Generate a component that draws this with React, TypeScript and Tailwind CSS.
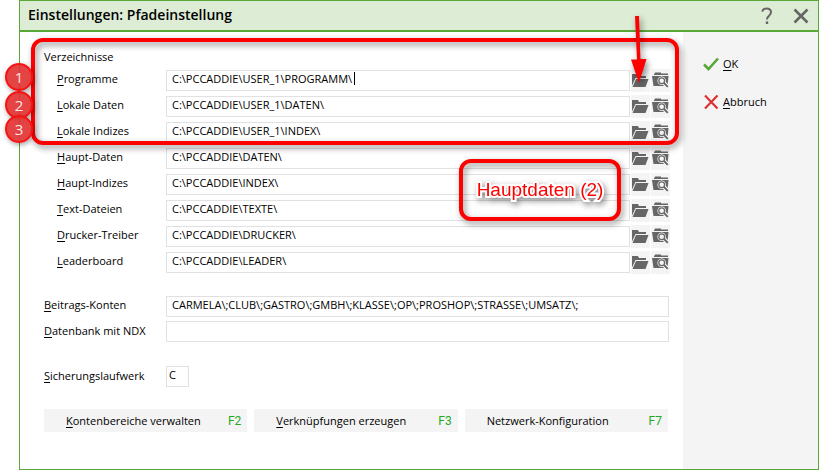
import { useId, type ReactNode } from "react";
import clsx from "clsx";

const directories = [
  { label: "Programme", value: "C:\\PCCADDIE\\USER_1\\PROGRAMM\\", active: true },
  { label: "Lokale Daten", value: "C:\\PCCADDIE\\USER_1\\DATEN\\" },
  { label: "Lokale Indizes", value: "C:\\PCCADDIE\\USER_1\\INDEX\\" },
  { label: "Haupt-Daten", value: "C:\\PCCADDIE\\DATEN\\" },
  { label: "Haupt-Indizes", value: "C:\\PCCADDIE\\INDEX\\" },
  { label: "Text-Dateien", value: "C:\\PCCADDIE\\TEXTE\\" },
  { label: "Drucker-Treiber", value: "C:\\PCCADDIE\\DRUCKER\\" },
  { label: "Leaderboard", value: "C:\\PCCADDIE\\LEADER\\" },
];

export default function App() {
  return (
    <div className="min-h-screen flex pl-[19px] bg-white font-['Open_Sans',sans-serif] text-[11px] leading-4 text-black">
      <div className="flex-1 min-w-0 flex flex-col border border-[#5aa637] bg-white">
        <TitleBar />
        <div className="flex-1 flex">
          <main className="flex-1 min-w-0 pl-6 pr-[13px] pt-[17px] pb-9">
            <DirectorySection />
            <AccountSection />
            <FunctionKeys />
          </main>
          <SideBar />
        </div>
      </div>
    </div>
  );
}

const TitleBar = () => {
  return (
    <header className="h-[31px] flex items-center justify-between pl-2 pr-[9px] border-b-2 border-[#5aa637] bg-[#ddecd5]">
      <h1 className="pb-[2px] text-[14px] leading-5 font-semibold">Einstellungen: Pfadeinstellung</h1>
      <div className="flex items-center gap-[19px]">
        <button aria-label="Hilfe">
          <svg width="14" height="18" viewBox="0 0 14 18" fill="none" stroke="#666" strokeWidth="2">
            <path d="M2.2 4.6C2.6 2.6 4.3 1.5 6.4 1.5C9 1.5 11 2.9 11 5.3C11 7.2 9.8 8.1 8.6 9.2C7.4 10.2 7 10.8 7 12.6" />
            <path d="M7 14.4V17" strokeWidth="2.4" />
          </svg>
        </button>
        <button aria-label="Schließen">
          <svg width="16" height="16" viewBox="0 0 16 16" fill="none" stroke="#666" strokeWidth="2.6">
            <path d="M1.5 1.5L14.5 14.5M14.5 1.5L1.5 14.5" />
          </svg>
        </button>
      </div>
    </header>
  );
};

const DirectorySection = () => {
  return (
    <section className="relative">
      <h2>Verzeichnisse</h2>
      <div className="mt-1 flex flex-col gap-[3px]">
        {directories.map((item) => (
          <DirectoryRow key={item.label} {...item} />
        ))}
      </div>
      <RedFrame className="-top-[11px] -left-[13px] -right-[9px] h-[107px]" />
      <Badge className="top-[14px]">1</Badge>
      <Badge className="top-[42px]">2</Badge>
      <Badge className="top-[66px]">3</Badge>
      <RedFrame className="right-[49px] top-[110px] w-[162px] h-[62px] flex items-center justify-center">
        <Caption />
      </RedFrame>
      <Arrow />
    </section>
  );
};

type RowProps = { label: string; value: string; active?: boolean };

const DirectoryRow = ({ label, value, active }: RowProps) => {
  const id = useId();

  return (
    <div className="h-[23px] flex items-center">
      <label htmlFor={id} className="w-[122px] pl-[13px] pb-1">
        <Accel text={label} />
      </label>
      <div className="relative flex-1 flex">
        <TextBox id={id} value={value} className="w-full pl-[5px]" />
        {active && <span className="absolute left-[188px] top-[2px] w-px h-[13px] bg-black" />}
      </div>
      <button aria-label={label + " öffnen"} className="ml-px w-[19px] h-[23px] flex items-center justify-center bg-[#f4f4f4]">
        <FolderIcon />
      </button>
      <button aria-label={label + " suchen"} className="ml-px w-[19px] h-[23px] flex items-center justify-center bg-[#f4f4f4]">
        <FolderSearchIcon />
      </button>
    </div>
  );
};

const AccountSection = () => {
  const id = useId();

  return (
    <section className="mt-[22px] pr-px flex flex-col gap-1">
      <div className="flex items-center">
        <label htmlFor={id + "k"} className="w-[122px] pb-1"><Accel text="Beitrags-Konten" /></label>
        <TextBox
          id={id + "k"}
          value={"CARMELA\\;CLUB\\;GASTRO\\;GMBH\\;KLASSE\\;OP\\;PROSHOP\\;STRASSE\\;UMSATZ\\;"}
          className="flex-1 pl-[5px]"
        />
      </div>
      <div className="flex items-center">
        <label htmlFor={id + "n"} className="w-[122px] pb-[2px]"><Accel text="Datenbank mit NDX" /></label>
        <TextBox id={id + "n"} value="" className="flex-1 pl-[5px]" />
      </div>
      <div className="mt-5 flex items-center">
        <label htmlFor={id + "s"} className="w-[122px] pb-[2px]"><Accel text="Sicherungslaufwerk" /></label>
        <TextBox id={id + "s"} value="C" className="w-[23px] pl-[2px]" />
      </div>
    </section>
  );
};

const FunctionKeys = () => {
  return (
    <div className="mt-[22px] pr-[2px] flex gap-[7px]">
      <FunctionKey hotkey="F2"><Accel text="Kontenbereiche verwalten" /></FunctionKey>
      <FunctionKey hotkey="F3"><Accel text="Verknüpfungen erzeugen" /></FunctionKey>
      <FunctionKey hotkey="F7">Netzwerk-Konfiguration</FunctionKey>
    </div>
  );
};

const FunctionKey = ({ hotkey, children }: { hotkey: string; children: ReactNode }) => {
  return (
    <button className="flex-1 h-[23px] flex items-center justify-between pl-[22px] pr-[6px] bg-[#f4f4f4] whitespace-nowrap">
      <span>{children}</span>
      <span className="text-[12px] font-['Roboto',sans-serif] text-[#1faa1f]">{hotkey}</span>
    </button>
  );
};

const SideBar = () => {
  return (
    <aside className="w-[135px] shrink-0 pl-5 pt-6 flex flex-col items-start gap-[22px] bg-[#f4f4f4]">
      <button className="flex items-center gap-1">
        <svg width="16" height="14" viewBox="0 0 16 14" fill="none" stroke="#5aa637" strokeWidth="2.6">
          <path d="M1 7.5L5.5 12L15 1.5" />
        </svg>
        <Accel text="OK" />
      </button>
      <button className="flex items-center gap-1">
        <svg width="16" height="16" viewBox="0 0 16 16" fill="none" stroke="#dc3232" strokeWidth="2.2">
          <path d="M2 1.5L14.5 14.5M14.5 1.5L2 14.5" />
        </svg>
        <Accel text="Abbruch" />
      </button>
    </aside>
  );
};

const TextBox = ({ id, value, className }: { id: string; value: string; className?: string }) => {
  return (
    <input
      id={id}
      type="text"
      defaultValue={value}
      className={clsx("h-[21px] min-w-0 pb-1 border border-[#e1e1e1] bg-white outline-none", className)}
    />
  );
};

// first letter is the keyboard accelerator
const Accel = ({ text }: { text: string }) => {
  return (
    <span className="whitespace-nowrap">
      <span className="underline underline-offset-2">{text[0]}</span>
      {text.slice(1)}
    </span>
  );
};

const FolderIcon = () => {
  return (
    <svg width="17" height="15" viewBox="0 0 17 15" fill="#666">
      <path d="M0 1H6L7 3H14V5H3.5L0 12.5Z" />
      <path d="M4 6H16.5L13.5 14H0.5Z" />
    </svg>
  );
};

const FolderSearchIcon = () => {
  return (
    <svg width="17" height="17" viewBox="0 0 17 17" fill="none">
      <path d="M3 0.5H9V1.5H16V3H2V1.5H3Z" fill="#666" />
      <path d="M0 4H16.5L15.5 14H1.5Z" fill="#666" />
      <path d="M12 11L15.8 14.8" stroke="#f4f4f4" strokeWidth="4" />
      <circle cx="9.7" cy="8.7" r="4.3" fill="#f4f4f4" />
      <circle cx="9.7" cy="8.7" r="2.9" fill="#f4f4f4" stroke="#666" strokeWidth="1.3" />
      <path d="M12 11L15.8 14.8" stroke="#666" strokeWidth="1.8" />
    </svg>
  );
};

const RedFrame = ({ className, children }: { className: string; children?: ReactNode }) => {
  return (
    <div
      className={clsx(
        "absolute pointer-events-none rounded-[12px] border-[4px] border-[#fd0000] drop-shadow-[2px_3px_3px_rgba(0,0,0,0.45)]",
        className
      )}
    >
      {children}
    </div>
  );
};

const Caption = () => {
  return (
    <span className="font-['Liberation_Sans',sans-serif] text-[19px] leading-5 text-[#fd0000] whitespace-nowrap [-webkit-text-stroke:4px_white] [paint-order:stroke_fill]">
      Hauptdaten (2)
    </span>
  );
};

const Badge = ({ className, children }: { className: string; children: ReactNode }) => {
  return (
    <div
      className={clsx(
        "absolute -left-[39px] size-7 rounded-full border-2 border-[#f51414] bg-[#e23030]/90 flex items-center justify-center",
        "font-['Open_Sans',sans-serif] text-[15px] leading-5 text-[#ffe4e4] shadow-[1px_2px_5px_rgba(0,0,0,0.35)]",
        className
      )}
    >
      {children}
    </div>
  );
};

const Arrow = () => {
  return (
    <svg
      className="absolute right-[23px] -top-[33px] pointer-events-none drop-shadow-[2px_3px_3px_rgba(0,0,0,0.45)]"
      width="17"
      height="67"
      viewBox="0 0 17 67"
      fill="#fd0000"
    >
      <path d="M5 0H9L10.5 43H16.5L9 67L1 43.5H7Z" />
    </svg>
  );
};
